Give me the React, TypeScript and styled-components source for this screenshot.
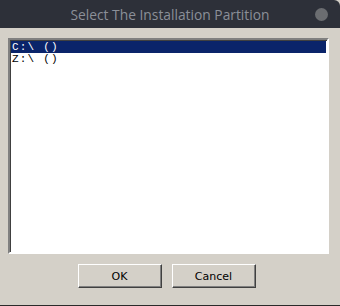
import * as React from 'react'
import styled, {createGlobalStyle} from 'styled-components'

const Global = createGlobalStyle`
  html, body {
    margin: 0;
    padding: 0;
    background: #d4d0c8;
  }
`

const Window = styled('div')`
  width: 340px;
  height: 306px;
  display: flex;
  flex-direction: column;
  background: #d4d0c8;
  border-bottom: 1px solid #2a2a2a;
  box-sizing: border-box;
  overflow: hidden;
`

const TitleBar = styled('div')`
  height: 28px;
  flex: none;
  display: flex;
  align-items: center;
  justify-content: center;
  position: relative;
  background: #2d3039;
  border-top-right-radius: 6px;
  font-family: "Open Sans", "Noto Sans", sans-serif;
  font-size: 13.8px;
  color: #8b8f98;
`

const CloseDot = styled('span')`
  position: absolute;
  right: 12px;
  top: 8px;
  width: 13px;
  height: 13px;
  border-radius: 50%;
  background: #6b6d71;
`

const Body = styled('div')`
  flex: 1;
  display: flex;
  flex-direction: column;
  padding: 10px 11px 17px 8px;
`

const ListBox = styled('div')`
  height: 216px;
  background: #fff;
  border-top: 2px solid #808080;
  border-left: 2px solid #808080;
  border-right: 2px solid #fff;
  border-bottom: 2px solid #fff;
  box-shadow: inset 1px 1px 0 #404040;
  padding: 1px 1px;
  box-sizing: border-box;
`

const Row = styled('div')<{$selected?: boolean}>`
  height: 12px;
  line-height: 12px;
  padding-left: 1px;
  font-family: "Liberation Mono", monospace;
  font-size: 11px;
  letter-spacing: 1.2px;
  white-space: pre;
  overflow: hidden;
  color: ${p => (p.$selected ? '#fff' : '#000')};
  background: ${p => (p.$selected ? '#0a246a' : 'transparent')};
`

const Buttons = styled('div')`
  display: flex;
  justify-content: center;
  gap: 10px;
  margin-top: auto;
  padding-right: 4px;
`

const Button = styled('button')`
  width: 84px;
  height: 24px;
  background: #d4d0c8;
  border-top: 1px solid #fff;
  border-left: 1px solid #fff;
  border-right: 1px solid #404040;
  border-bottom: 1px solid #404040;
  box-shadow: inset -1px -1px 0 #808080;
  font-family: "DejaVu Sans", sans-serif;
  font-size: 11px;
  color: #000;
  padding: 0;
`

const App = () => (
  <>
    <Global />
    <Window>
      <TitleBar>
        Select The Installation Partition
        <CloseDot />
      </TitleBar>
      <Body>
        <ListBox>
          <Row $selected={true}>C:\ ()</Row>
          <Row>Z:\ ()</Row>
        </ListBox>
        <Buttons>
          <Button>OK</Button>
          <Button>Cancel</Button>
        </Buttons>
      </Body>
    </Window>
  </>
)

export default App
